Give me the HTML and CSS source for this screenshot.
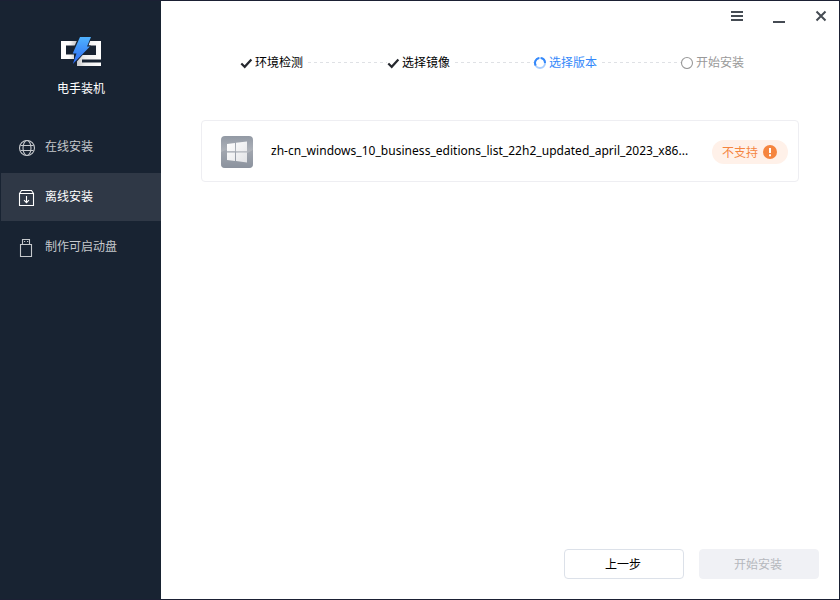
FILE: index.html
```html
<!DOCTYPE html>
<html lang="zh-CN">
<head>
<meta charset="utf-8">
<title>电手装机</title>
<link rel="stylesheet" href="styles.css">
</head>
<body>
<div class="window">
  <aside class="sidebar">
    <div class="brand">
      <svg class="logo" width="42" height="32" viewBox="60 36 42 32">
        <defs>
          <linearGradient id="bolt" x1="0" y1="0" x2="0" y2="1"><stop offset="0" stop-color="#4fb2ff"/><stop offset="1" stop-color="#2d68f0"/></linearGradient>
          <linearGradient id="shade" x1="0" y1="0" x2="1" y2="0"><stop offset="0" stop-color="#fff"/><stop offset=".2" stop-color="#fff"/><stop offset=".38" stop-color="#c4c4c6"/><stop offset=".6" stop-color="#eee"/><stop offset="1" stop-color="#fff"/></linearGradient>
        </defs>
        <path fill="url(#shade)" d="M61 41H101V59.500H82V62.500H101V66H77V55H96V45.500H66V54.500H74V59H61Z"/>
        <path class="logo-gap" d="M79 36H92L88.500 45.500H91L73 66L75 54H71Z"/>
        <path fill="url(#bolt)" d="M80 37H91L87 46.500H90L72.800 64L76.500 53.500H72.700Z"/>
      </svg>
      <div class="brand-name">电手装机</div>
    </div>
    <nav class="nav">
      <a class="nav-item">
        <svg class="nav-icon" width="18" height="20" viewBox="0 0 18 20"><g class="line"><circle cx="9" cy="10" r="7.500"/><ellipse cx="9" cy="10" rx="4" ry="7.500"/><path d="M2.500 7.500H15.500M2.500 12.500H15.500"/></g></svg>
        <span>在线安装</span>
      </a>
      <a class="nav-item active">
        <svg class="nav-icon" width="18" height="20" viewBox="0 0 18 20"><g class="line"><path d="M1.500 5.500H15.500V17.500H1.500ZM1.500 5.500L3.500 2.500H13.500L15.500 5.500M8.500 8V14.500M6 12.200L8.500 14.700L11 12.200"/></g></svg>
        <span>离线安装</span>
      </a>
      <a class="nav-item">
        <svg class="nav-icon" width="18" height="20" viewBox="0 0 18 20"><g class="line"><path d="M2.500 6.500H13.500V18.500H2.500ZM4.500 6.500V1.500H11.500V6.500M6 3.500H7.200M9 3.500H10.200"/></g></svg>
        <span>制作可启动盘</span>
      </a>
    </nav>
  </aside>
  <main class="main">
    <header class="titlebar">
      <svg width="12" height="12" viewBox="0 0 12 12"><path class="control" d="M0 2H12M0 6H12M0 10H12"/></svg>
      <svg width="12" height="12" viewBox="0 0 12 12"><path class="control" d="M0 12H12"/></svg>
      <svg width="12" height="12" viewBox="0 0 12 12"><path class="control" d="M1.500 1.500L10.500 10.500M10.500 1.500L1.500 10.500"/></svg>
    </header>
    <div class="steps">
      <div class="step"><svg width="14" height="14" viewBox="0 0 14 14"><path class="check" d="M1.300 8.500L4.700 11.800L11.400 4.500"/></svg><span>环境检测</span></div>
      <i class="dash"></i>
      <div class="step"><svg width="14" height="14" viewBox="0 0 14 14"><path class="check" d="M1.300 8.500L4.700 11.800L11.400 4.500"/></svg><span>选择镜像</span></div>
      <i class="dash"></i>
      <div class="step current"><svg width="14" height="14" viewBox="0 0 14 14"><circle class="ring" cx="6" cy="8" r="5"/><path class="ring-arc" d="M5 3.100A5 5 0 0 0 1.700 10.500M7 3.100A5 5 0 0 1 11 8"/></svg><span>选择版本</span></div>
      <i class="dash"></i>
      <div class="step pending"><svg width="14" height="14" viewBox="0 0 14 14"><circle class="circle" cx="6" cy="8" r="5.500"/></svg><span>开始安装</span></div>
    </div>
    <section class="card">
      <svg class="os-icon" width="32" height="32" viewBox="0 0 32 32">
        <defs>
          <linearGradient id="tile" x1="0" y1="0" x2="0" y2="1"><stop offset="0" stop-color="#9299a4"/><stop offset=".5" stop-color="#b0b4bb"/><stop offset="1" stop-color="#8b929e"/></linearGradient>
          <linearGradient id="pane" x1="0" y1="0" x2="1" y2="1"><stop offset="0" stop-color="#fff"/><stop offset="1" stop-color="#e2e3e6"/></linearGradient>
        </defs>
        <rect width="32" height="32" rx="4" fill="url(#tile)"/>
        <path d="M0 16Q8 12 16 16T32 14V28Q32 32 28 32H4Q0 32 0 28Z" fill="#8c939e" opacity=".45"/>
        <path fill="url(#pane)" d="M6 8L14 7V15.300H6ZM15 6.800L26 5.500V15.300H15ZM6 16.500H14V25L6 24ZM15 16.500H26V26.500L15 25.100Z"/>
      </svg>
      <div class="file-name">zh-cn_windows_10_business_editions_list_22h2_updated_april_2023_x86...</div>
      <div class="badge"><span>不支持</span><svg width="14" height="14" viewBox="0 0 14 14"><circle cx="7" cy="7" r="7" fill="#f5853f"/><path d="M7 3V8M7 9.300V11.200" stroke="#fff" stroke-width="2"/></svg></div>
    </section>
    <footer class="actions">
      <button class="button">上一步</button>
      <button class="button disabled">开始安装</button>
    </footer>
  </main>
</div>
</body>
</html>
```
FILE: styles.css
```css
* { box-sizing: border-box; }
body {
  margin: 0;
  font: 12px/16px "Noto Sans", "Noto Sans CJK SC", sans-serif;
  color: #000;
}
svg { display: block; flex: none; }
.window {
  display: flex;
  width: 840px;
  height: 600px;
  border: 1px solid #1b2034;
  background: #fff;
}
.sidebar { width: 160px; flex: none; background: #182332; box-shadow: -1px 0 #182332; }
.brand {
  display: flex;
  flex-direction: column;
  align-items: center;
  height: 122px;
  padding-top: 35px;
  color: #fff;
}
.logo-gap { fill: #182332; }
.brand-name { margin-top: 12px; font-family: "Noto Sans CJK SC", sans-serif; }
.nav { display: flex; flex-direction: column; gap: 2px; }
.nav-item {
  display: flex;
  align-items: center;
  height: 48px;
  padding-left: 17px;
  gap: 9px;
  color: #c5c8cc;
  font-family: "Noto Sans CJK SC", sans-serif;
}
.nav-icon { margin-top: 2px; }
.nav-item span { margin-top: -2px; }
.nav-item.active { background: #2f3846; color: #fff; }
.line { fill: none; stroke: currentColor; stroke-width: 1.1; }
.main { display: flex; flex-direction: column; flex: 1; min-width: 0; }
.titlebar {
  display: flex;
  justify-content: flex-end;
  align-items: center;
  gap: 30px;
  height: 30px;
  padding-right: 12px;
}
.titlebar svg { overflow: visible; }
.control { fill: none; stroke: #454b53; stroke-width: 2; }
.steps {
  display: flex;
  align-items: center;
  height: 16px;
  margin: 23px 95px 0 79px;
  font-family: "Noto Sans CJK SC", sans-serif;
}
.step { display: flex; align-items: center; gap: 1px; flex: none; }
.step span { margin-top: -1px; }
.dash {
  flex: 1;
  height: 1px;
  margin-left: 2px;
  background: repeating-linear-gradient(90deg, transparent 0 3px, #dfe1e5 3px 6px);
}
.check { fill: none; stroke: #25282e; stroke-width: 2.2; }
.current { color: #3488fa; }
.pending { color: #999; }
.ring { fill: none; stroke: #a9ceff; stroke-width: 2; }
.ring-arc { fill: none; stroke: #3488fa; stroke-width: 2; }
.circle { fill: none; stroke: #999; stroke-width: 1.1; }
.card {
  display: flex;
  align-items: center;
  height: 62px;
  margin: 50px 40px 0;
  padding: 0 10px 0 19px;
  border: 1px solid #eeeef2;
  border-radius: 4px;
}
.os-icon { margin-top: 2px; }
.file-name { width: 424px; margin-left: 18px; white-space: nowrap; letter-spacing: 0.03px; }
.badge {
  display: flex;
  align-items: center;
  justify-content: space-between;
  width: 76px;
  height: 24px;
  margin: 2px 0 0 auto;
  padding: 0 11px 0 10px;
  border-radius: 12px;
  background: #fff1e9;
  color: #f5853f;
  font-family: "Noto Sans CJK SC", sans-serif;
}
.badge span { margin-top: -1px; }
.actions {
  display: flex;
  justify-content: flex-end;
  gap: 15px;
  margin: auto 20px 20px 0;
}
.button {
  width: 120px;
  height: 30px;
  padding: 0 2px 0 0;
  border: 1px solid #dce1e9;
  border-radius: 4px;
  background: #fff;
  color: #000;
  font: 12px/16px "Noto Sans CJK SC", sans-serif;
}
.button.disabled { border-color: #f0f1f5; background: #f0f1f5; color: #b5b8bd; }
```
